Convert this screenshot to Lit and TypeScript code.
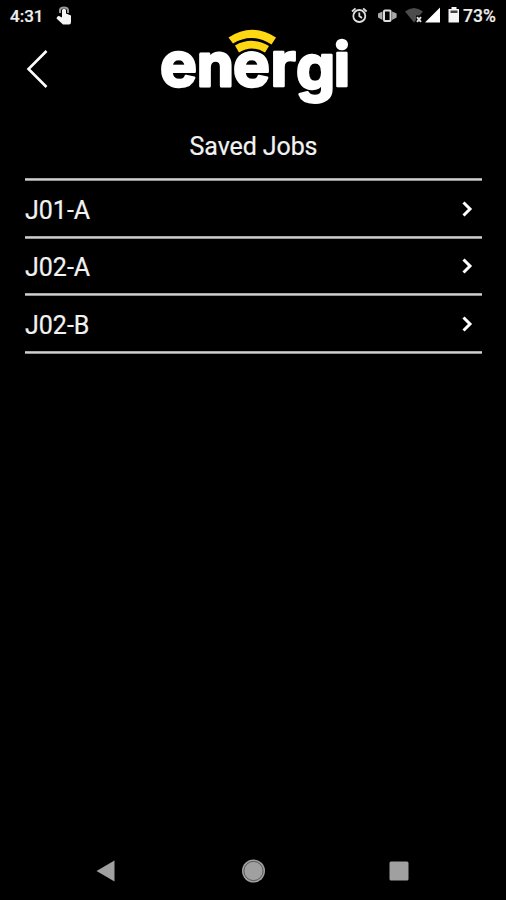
import { LitElement, html, css } from "lit";
import { customElement, property } from "lit/decorators.js";

@customElement("status-bar")
class StatusBar extends LitElement {
  static styles = css`
    :host { display: flex; height: 32px; align-items: center; color: #eee; font: 500 17px/32px Roboto, sans-serif; }
    .time { margin-left: 10px; width: 46px; }
    .level { font-size: 17.500px; width: 43px; }
    .touch { flex: none; }
    .icons { margin-left: auto; flex: none; }
    svg { display: block; }
  `;
  render() {
    return html`
      <span class="time">4:31</span>
      <svg class="touch" width="18" height="32" viewBox="56 0 18 32">
        <path d="M60 13V10Q60.500 7.500 64 7.500T68 10V13" fill="none" stroke="#999" stroke-width="2" />
        <path d="M62 10Q64 7.500 66 10V13.500L71 15.500V22Q71 24.500 69 24.500H63L56.500 18.500Q57 15.500 59 16L62 17.500Z" fill="#f5f5f5" />
      </svg>
      <svg class="icons" width="112" height="32" viewBox="351 0 112 32">
        <g fill="none" stroke="#ddd" stroke-width="1.8">
          <circle cx="359.3" cy="16" r="6" />
          <path d="M352 11.5L355.5 8.3M366.6 11.5L363.1 8.3M359.3 12.5V16L362 18" />
          <rect x="384" y="10.5" width="6.6" height="10.5" rx="1" stroke-width="2" />
        </g>
        <path d="M382.500 11.5V20L378 17.5V13.5ZM392.100 11.5V20L396.600 17.5V13.5Z" fill="#aaa" />
        <path d="M405 11.5Q414 4.500 423 11.500L414 22.500Z" fill="#4c4c4c" />
        <path d="M416 15.500H422V22.500H416Z" fill="#000" />
        <path d="M417 17.200L421 21.800M421 17.200L417 21.800" stroke="#ddd" stroke-width="2" />
        <path d="M440 7.500V22.500H425Z" fill="#fff" />
        <path d="M448.500 9H451.500V7H456.500V9H459V22.500H448.500Z" fill="#f5f5f5" />
        <path d="M450.500 10.500H457.500V13H450.500Z" fill="#444" />
      </svg>
      <span class="level">73%</span>
    `;
  }
}

@customElement("brand-header")
class BrandHeader extends LitElement {
  static styles = css`
    :host { display: flex; height: 80px; }
    .back { flex: none; margin: 17px 0 0 25px; }
    .logo { flex: none; margin-left: 101px; margin-top: -8px; }
    svg { display: block; }
    .word { font: 700 62px Inter, sans-serif; fill: #fff; stroke: #fff; stroke-width: 2.600; stroke-linejoin: round; }
    .narrow { font-size: 59px; stroke-width: 3; }
    .stem { font-size: 60px; }
  `;
  render() {
    return html`
      <svg class="back" width="24" height="42" viewBox="25 49 24 42">
        <path d="M46.500 51L28.500 69L46.500 87" fill="none" stroke="#fff" stroke-width="2.600" />
      </svg>
      <svg class="logo" width="206" height="86" viewBox="150 24 206 86">
        <text class="word" y="86"><tspan x="160">e</tspan><tspan class="narrow" x="197">n</tspan><tspan x="233">e</tspan><tspan x="270.500">r</tspan><tspan x="296" y="88.500">g</tspan><tspan class="stem" x="333.800" y="86">i</tspan></text>
        <path d="M236 54.500Q252 42.500 268 54.500" fill="none" stroke="#000" stroke-width="5" />
        <path d="M228.500 37.500Q252 22 276 37.500L271.500 44.500Q252 32 233 43.500Z" fill="#ffd814" />
        <path d="M235 45.500Q252 36 269 46L265 52.500Q252 44.500 239 52.500Z" fill="#ffd814" />
      </svg>
    `;
  }
}

@customElement("job-row")
class JobRow extends LitElement {
  @property() name = "";
  static styles = css`
    :host { display: flex; box-sizing: border-box; height: 57.660px; align-items: center; justify-content: space-between; padding: 4px 9px 0 0; }
    .name { padding-top: 3.500px; }
    svg { display: block; }
  `;
  render() {
    return html`<span class="name">${this.name}</span>
      <svg width="12" height="18" viewBox="0 0 12 18">
        <path d="M2.500 2.500L9 9L2.500 15.500" fill="none" stroke="#fff" stroke-width="3" />
      </svg>`;
  }
}

@customElement("nav-bar")
class NavBar extends LitElement {
  static styles = css`
    :host { display: flex; height: 58px; align-items: center; justify-content: space-between; padding: 0 97px 0 95px; }
    svg { display: block; }
  `;
  render() {
    return html`
      <svg width="22" height="24" viewBox="0 0 22 24"><path d="M1.500 12L19.500 1.500V22.500Z" fill="#a0a0a0" /></svg>
      <svg width="26" height="26" viewBox="0 0 26 26">
        <circle cx="13.500" cy="13" r="11.500" fill="#a0a0a0" />
        <circle cx="13.500" cy="13" r="9.600" fill="none" stroke="#444" stroke-width=".8" />
      </svg>
      <svg width="20" height="20" viewBox="0 0 20 20"><rect x=".5" y=".5" width="19" height="19" rx="1.500" fill="#a0a0a0" /></svg>
    `;
  }
}

@customElement("app-root")
class AppRoot extends LitElement {
  static styles = css`
    :host { display: flex; flex-direction: column; height: 900px; background: #000; color: #f2f2f2; font: 400 25px/30px Roboto, sans-serif; -webkit-text-stroke: 0.200px #f2f2f2; }
    .title { text-align: center; height: 66px; padding: 20px 0 0 1px; box-sizing: border-box; letter-spacing: -0.100px; }
    .list { margin: 0 24px 0 25px; }
    .rule { display: block; width: 100%; height: 3px; margin-bottom: -3px; }
    .space { flex: 1; }
  `;
  jobs = ["J01-A", "J02-A", "J02-B"];
  rule() {
    return html`<svg class="rule" preserveAspectRatio="none" viewBox="0 0 457 3"><rect y=".2" width="457" height="2.500" fill="#d0d0d0" /></svg>`;
  }
  render() {
    return html`
      <status-bar></status-bar>
      <brand-header></brand-header>
      <div class="title">Saved Jobs</div>
      <div class="list">
        ${this.rule()}
        ${this.jobs.map((job) => html`<job-row .name=${job}></job-row>${this.rule()}`)}
      </div>
      <div class="space"></div>
      <nav-bar></nav-bar>
    `;
  }
}
